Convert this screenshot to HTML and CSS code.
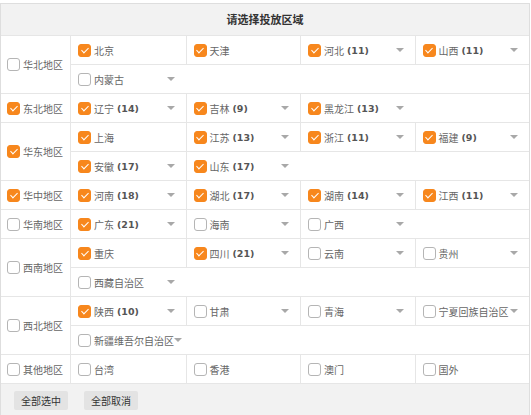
FILE: index.html
```html
<!DOCTYPE html>
<html lang="zh-CN">
<head>
    <meta charset="UTF-8" />
    <meta name="viewport" content="width=device-width, initial-scale=1.0" />
    <title>请选择投放区域</title>
    <link rel="stylesheet" href="styles.css">
</head>
<body>

    <div class="area">
        <div class="area-title">请选择投放区域</div>

        <div class="region">
            <div class="region-name"><span class="cb"></span>华北地区</div>
            <div class="provinces">
                <div class="line">
                    <div class="prov"><span class="cb on"></span>北京</div>
                    <div class="prov"><span class="cb on"></span>天津</div>
                    <div class="prov"><span class="cb on"></span>河北<b>(11)</b><i class="arrow"></i></div>
                    <div class="prov"><span class="cb on"></span>山西<b>(11)</b><i class="arrow"></i></div>
                </div>
                <div class="line">
                    <div class="prov"><span class="cb"></span>内蒙古<i class="arrow"></i></div>
                </div>
            </div>
        </div>

        <div class="region">
            <div class="region-name"><span class="cb on"></span>东北地区</div>
            <div class="provinces">
                <div class="line">
                    <div class="prov"><span class="cb on"></span>辽宁<b>(14)</b><i class="arrow"></i></div>
                    <div class="prov"><span class="cb on"></span>吉林<b>(9)</b><i class="arrow"></i></div>
                    <div class="prov"><span class="cb on"></span>黑龙江<b>(13)</b><i class="arrow"></i></div>
                </div>
            </div>
        </div>

        <div class="region">
            <div class="region-name"><span class="cb on"></span>华东地区</div>
            <div class="provinces">
                <div class="line">
                    <div class="prov"><span class="cb on"></span>上海</div>
                    <div class="prov"><span class="cb on"></span>江苏<b>(13)</b><i class="arrow"></i></div>
                    <div class="prov"><span class="cb on"></span>浙江<b>(11)</b><i class="arrow"></i></div>
                    <div class="prov"><span class="cb on"></span>福建<b>(9)</b><i class="arrow"></i></div>
                </div>
                <div class="line">
                    <div class="prov"><span class="cb on"></span>安徽<b>(17)</b><i class="arrow"></i></div>
                    <div class="prov"><span class="cb on"></span>山东<b>(17)</b><i class="arrow"></i></div>
                </div>
            </div>
        </div>

        <div class="region">
            <div class="region-name"><span class="cb on"></span>华中地区</div>
            <div class="provinces">
                <div class="line">
                    <div class="prov"><span class="cb on"></span>河南<b>(18)</b><i class="arrow"></i></div>
                    <div class="prov"><span class="cb on"></span>湖北<b>(17)</b><i class="arrow"></i></div>
                    <div class="prov"><span class="cb on"></span>湖南<b>(14)</b><i class="arrow"></i></div>
                    <div class="prov"><span class="cb on"></span>江西<b>(11)</b><i class="arrow"></i></div>
                </div>
            </div>
        </div>

        <div class="region">
            <div class="region-name"><span class="cb"></span>华南地区</div>
            <div class="provinces">
                <div class="line">
                    <div class="prov"><span class="cb on"></span>广东<b>(21)</b><i class="arrow"></i></div>
                    <div class="prov"><span class="cb"></span>海南<i class="arrow"></i></div>
                    <div class="prov"><span class="cb"></span>广西<i class="arrow"></i></div>
                </div>
            </div>
        </div>

        <div class="region">
            <div class="region-name"><span class="cb"></span>西南地区</div>
            <div class="provinces">
                <div class="line">
                    <div class="prov"><span class="cb on"></span>重庆</div>
                    <div class="prov"><span class="cb on"></span>四川<b>(21)</b><i class="arrow"></i></div>
                    <div class="prov"><span class="cb"></span>云南<i class="arrow"></i></div>
                    <div class="prov"><span class="cb"></span>贵州<i class="arrow"></i></div>
                </div>
                <div class="line">
                    <div class="prov"><span class="cb"></span>西藏自治区<i class="arrow"></i></div>
                </div>
            </div>
        </div>

        <div class="region">
            <div class="region-name"><span class="cb"></span>西北地区</div>
            <div class="provinces">
                <div class="line">
                    <div class="prov"><span class="cb on"></span>陕西<b>(10)</b><i class="arrow"></i></div>
                    <div class="prov"><span class="cb"></span>甘肃<i class="arrow"></i></div>
                    <div class="prov"><span class="cb"></span>青海<i class="arrow"></i></div>
                    <div class="prov"><span class="cb"></span>宁夏回族自治区<i class="arrow"></i></div>
                </div>
                <div class="line">
                    <div class="prov"><span class="cb"></span>新疆维吾尔自治区<i class="arrow"></i></div>
                </div>
            </div>
        </div>

        <div class="region">
            <div class="region-name"><span class="cb"></span>其他地区</div>
            <div class="provinces">
                <div class="line">
                    <div class="prov"><span class="cb"></span>台湾</div>
                    <div class="prov"><span class="cb"></span>香港</div>
                    <div class="prov"><span class="cb"></span>澳门</div>
                    <div class="prov"><span class="cb"></span>国外</div>
                </div>
            </div>
        </div>

        <div class="actions">
            <button class="btn">全部选中</button>
            <button class="btn">全部取消</button>
        </div>
    </div>

</body>
</html>
```

FILE: styles.css
```css
:root {
    --orange: #f7871d;
    --line: #e6e6e6;
    --bg: #f2f2f2;
    --text: #666;
}

* {
    box-sizing: border-box;
}

body {
    margin: 0;
    padding: 3px 0 0;
    background: #fff;
    font-family: "Noto Sans CJK SC", "Noto Sans", sans-serif;
    font-size: 10px;
    color: var(--text);
}

.area {
    width: 530px;
    border: 1px solid #dedede;
    border-bottom: none;
}

.area-title {
    height: 32px;
    line-height: 31px;
    background: var(--bg);
    border-bottom: 1px solid var(--line);
    text-align: center;
    font-size: 11px;
    font-weight: bold;
    color: #333;
}

.region {
    display: flex;
    border-bottom: 1px solid var(--line);
}

.region-name {
    width: 70px;
    flex-shrink: 0;
    display: flex;
    align-items: center;
    padding-left: 6px;
    border-right: 1px solid var(--line);
    white-space: nowrap;
}

.provinces {
    flex: 1;
}

.line {
    display: grid;
    grid-template-columns: repeat(4, 1fr);
    height: 28px;
}

    .line + .line {
        height: 29px;
        border-top: 1px solid var(--line);
    }

.prov {
    display: flex;
    align-items: center;
    padding: 0 11px 0 7px;
    white-space: nowrap;
}

    .prov + .prov {
        border-left: 1px solid var(--line);
    }

    .prov b {
        margin-left: 3px;
        font-family: "DejaVu Sans", sans-serif;
        font-size: 9.5px;
        font-weight: bold;
        color: #555;
    }

.cb {
    position: relative;
    width: 13px;
    height: 13px;
    flex-shrink: 0;
    margin-right: 3px;
    border: 1px solid #b5b5b5;
    border-radius: 3px;
    background: #fff;
}

    .cb.on {
        background: var(--orange);
        border-color: var(--orange);
    }

        .cb.on::after {
            content: "";
            position: absolute;
            left: 3.5px;
            top: 1px;
            width: 3px;
            height: 6px;
            border-right: 1.5px solid #fff;
            border-bottom: 1.5px solid #fff;
            transform: rotate(45deg);
        }

.arrow {
    margin-left: auto;
    width: 0;
    height: 0;
    padding: 0;
    flex-shrink: 0;
    border-left: 4px solid transparent;
    border-right: 4px solid transparent;
    border-top: 4px solid #a8a8a8;
    box-sizing: content-box;
}

.actions {
    display: flex;
    gap: 16px;
    height: 40px;
    padding: 7px 13px;
    background: var(--bg);
}

.btn {
    width: 54px;
    height: 19px;
    padding: 0;
    border: none;
    border-radius: 2px;
    background: #e3e3e3;
    font-family: "Noto Sans CJK SC", sans-serif;
    font-size: 10px;
    color: #333;
    cursor: pointer;
}
```
